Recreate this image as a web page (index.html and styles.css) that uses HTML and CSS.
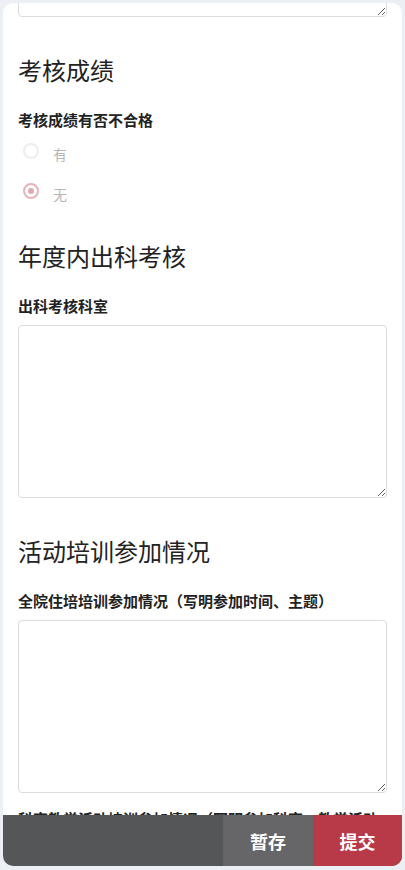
FILE: index.html
```html
<!DOCTYPE html>
<html lang="zh-CN">
<head>
    <meta charset="UTF-8">
    <meta name="viewport" content="width=device-width, initial-scale=1.0">
    <title>考核登记</title>
    <link rel="stylesheet" href="styles.css">
</head>
<body>
    <div class="card">
        <div class="scroll">
            <div class="field field-cut">
                <textarea class="text-box text-box-cut" disabled></textarea>
            </div>

            <section>
                <h2>考核成绩</h2>
                <div class="field field-radio">
                    <label class="field-label">考核成绩有否不合格</label>
                    <div class="radio-row">
                        <span class="radio"></span>
                        <span class="radio-text">有</span>
                    </div>
                    <div class="radio-row">
                        <span class="radio checked"></span>
                        <span class="radio-text">无</span>
                    </div>
                </div>
            </section>

            <section>
                <h2>年度内出科考核</h2>
                <div class="field">
                    <label class="field-label" for="dept">出科考核科室</label>
                    <textarea class="text-box" id="dept"></textarea>
                </div>
            </section>

            <section>
                <h2>活动培训参加情况</h2>
                <div class="field">
                    <label class="field-label" for="train">全院住培培训参加情况（写明参加时间、主题）</label>
                    <textarea class="text-box" id="train"></textarea>
                </div>
                <div class="field">
                    <label class="field-label" for="dept-train">科室教学活动培训参加情况（写明参加科室、教学活动名称）</label>
                    <textarea class="text-box" id="dept-train"></textarea>
                </div>
            </section>
        </div>

        <div class="action-bar">
            <div class="action-fill"></div>
            <button class="btn btn-save">暂存</button>
            <button class="btn btn-submit">提交</button>
        </div>
    </div>
</body>
</html>
```

FILE: styles.css
```css
body {
    margin: 0;
    padding: 3px;
    background-color: #eceff4;
    font-family: "Noto Sans CJK SC", "Noto Sans", sans-serif;
    color: #222;
}
.card {
    position: relative;
    height: 863px;
    background: #fff;
    border-radius: 10px;
    overflow: hidden;
}
.scroll {
    display: flex;
    flex-direction: column;
    padding: 0 15px;
}
h2 {
    margin: 20px 0 21px;
    font-size: 24px;
    line-height: 36px;
    font-weight: normal;
    color: #222;
}
.field {
    margin-bottom: 15px;
}
.field-cut {
    margin-top: -26px;
}
.field-radio {
    margin-bottom: 7px;
}
.field-label {
    display: block;
    margin-bottom: 8px;
    font-size: 15px;
    line-height: 22px;
    font-weight: bold;
    color: #222;
}
.field-radio .field-label {
    margin-bottom: 0;
}
.text-box {
    display: block;
    box-sizing: border-box;
    width: 100%;
    height: 173px;
    margin: 0;
    border: 1px solid #dcdcdc;
    border-radius: 4px;
    background: #fff;
    font-family: inherit;
}
.text-box-cut {
    height: 40px;
}
.radio-row {
    display: flex;
    align-items: flex-start;
    height: 40px;
}
.radio {
    box-sizing: border-box;
    width: 16px;
    height: 16px;
    margin: 12px 0 0 5px;
    border: 2px solid #ededed;
    border-radius: 50%;
    position: relative;
}
.radio.checked {
    border-color: #e6b3bb;
}
.radio.checked::after {
    content: "";
    position: absolute;
    left: 3px;
    top: 3px;
    width: 6px;
    height: 6px;
    border-radius: 50%;
    background: #e0a8b1;
}
.radio-text {
    margin: 12px 0 0 14px;
    font-size: 14px;
    line-height: 22px;
    color: #b5b5b5;
}
.action-bar {
    position: absolute;
    left: 0;
    right: 0;
    bottom: 0;
    height: 51px;
    display: flex;
    background: #555658;
}
.action-fill {
    flex: 1;
}
.btn {
    width: 90px;
    border: none;
    color: #fff;
    font-family: inherit;
    font-size: 18px;
    font-weight: bold;
}
.btn-save {
    background: #666668;
}
.btn-submit {
    width: 89px;
    background: #b83a49;
}
```
